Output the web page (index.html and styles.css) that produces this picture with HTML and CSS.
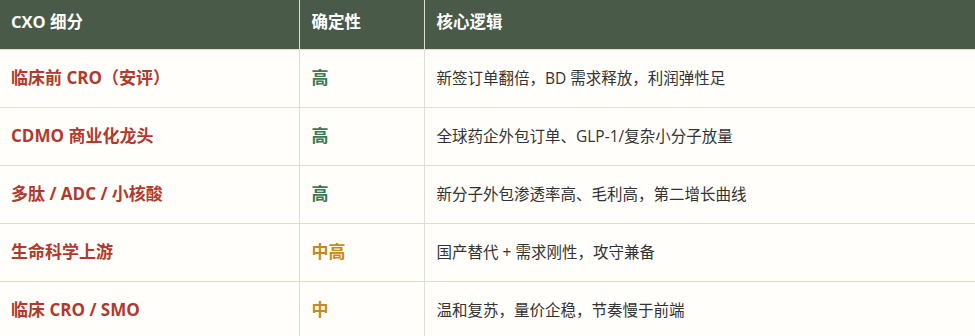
FILE: index.html
```html
<!DOCTYPE html>
<html lang="zh-CN">
<head>
<meta charset="utf-8">
<link rel="stylesheet" href="styles.css">
</head>
<body>
<table class="cxo">
  <colgroup>
    <col class="c1"><col class="c2"><col class="c3">
  </colgroup>
  <thead>
    <tr><th>CXO 细分</th><th>确定性</th><th>核心逻辑</th></tr>
  </thead>
  <tbody>
    <tr><td class="seg">临床前 CRO（安评）</td><td class="lvl hi">高</td><td class="logic">新签订单翻倍，BD 需求释放，利润弹性足</td></tr>
    <tr><td class="seg">CDMO 商业化龙头</td><td class="lvl hi">高</td><td class="logic">全球药企外包订单、GLP-1/复杂小分子放量</td></tr>
    <tr><td class="seg">多肽 / ADC / 小核酸</td><td class="lvl hi">高</td><td class="logic">新分子外包渗透率高、毛利高，第二增长曲线</td></tr>
    <tr><td class="seg">生命科学上游</td><td class="lvl mid">中高</td><td class="logic">国产替代 + 需求刚性，攻守兼备</td></tr>
    <tr><td class="seg">临床 CRO / SMO</td><td class="lvl mid">中</td><td class="logic">温和复苏，量价企稳，节奏慢于前端</td></tr>
  </tbody>
</table>
</body>
</html>
```

FILE: styles.css
```css
html, body {
  margin: 0;
  padding: 0;
  background: #fffefb;
}
body {
  font-family: "Open Sans", "Noto Sans CJK SC", sans-serif;
  font-size: 15.5px;
  color: #333;
}
.cxo {
  border-collapse: collapse;
  width: 975px;
  table-layout: fixed;
}
.c1 { width: 299px; }
.c2 { width: 125px; }
.cxo th, .cxo td {
  text-align: left;
  padding: 0 12px;
  border-right: 1px solid #e0dcd2;
  border-bottom: 1px solid #e0dcd2;
  line-height: 22px;
}
.cxo th:first-child, .cxo td:first-child {
  padding-left: 11px;
}
.cxo th:last-child, .cxo td:last-child {
  border-right: none;
}
.cxo th {
  background: #4a5a48;
  color: #ffffff;
  font-weight: 700;
  font-size: 16.5px;
  height: 49px;
  padding-bottom: 4px;
  box-sizing: border-box;
}
.cxo td {
  height: 57px;
  background: #fffefb;
}
.seg {
  color: #b03a2e;
  font-weight: 700;
  font-size: 17px;
}
.lvl {
  font-weight: 700;
  font-size: 17px;
}
.hi { color: #3b7a57; }
.mid { color: #c48a1a; }
.logic {
  color: #333333;
  font-weight: 400;
}
```
